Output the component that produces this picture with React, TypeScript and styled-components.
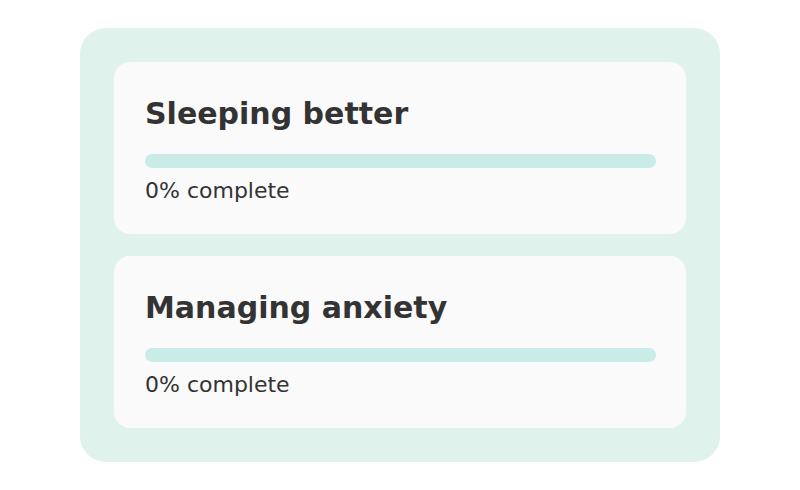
import React from "react";
import styled, { createGlobalStyle } from "styled-components";

const Global = createGlobalStyle`
  html, body { margin: 0; padding: 0; background: #ffffff; }
  body { font-family: "DejaVu Sans", "Noto Sans", sans-serif; }
`;

const Page = styled.div`
  width: 800px;
  height: 490px;
  display: flex;
  justify-content: center;
  padding-top: 28px;
  box-sizing: border-box;
`;

const Panel = styled.div`
  width: 640px;
  height: 434px;
  box-sizing: border-box;
  background: #e0f2ec;
  border-radius: 26px;
  padding: 34px;
  display: flex;
  flex-direction: column;
  gap: 22px;
`;

const Card = styled.div`
  background: #fafafa;
  border-radius: 16px;
  height: 172px;
  box-sizing: border-box;
  padding: 34px 30px 30px 31px;
  display: flex;
  flex-direction: column;
`;

const Title = styled.h2`
  margin: 0;
  font-size: 30px;
  font-weight: bold;
  color: #333333;
  line-height: 35px;
`;

const Track = styled.div`
  margin-top: 23px;
  height: 14px;
  border-radius: 7px;
  background: #c9ece8;
  overflow: hidden;
`;

const Fill = styled.div`
  height: 100%;
  background: #5cc7bb;
`;

const Status = styled.div`
  margin-top: 10px;
  font-size: 22px;
  color: #333333;
  line-height: 26px;
`;

const goals = [
  { title: "Sleeping better", progress: 0 },
  { title: "Managing anxiety", progress: 0 },
];

export default function App() {
  return (
    <>
      <Global />
      <Page>
        <Panel>
          {goals.map((g) => (
            <Card key={g.title}>
              <Title>{g.title}</Title>
              <Track>
                <Fill style={{ width: `${g.progress}%` }} />
              </Track>
              <Status>{g.progress}% complete</Status>
            </Card>
          ))}
        </Panel>
      </Page>
    </>
  );
}
